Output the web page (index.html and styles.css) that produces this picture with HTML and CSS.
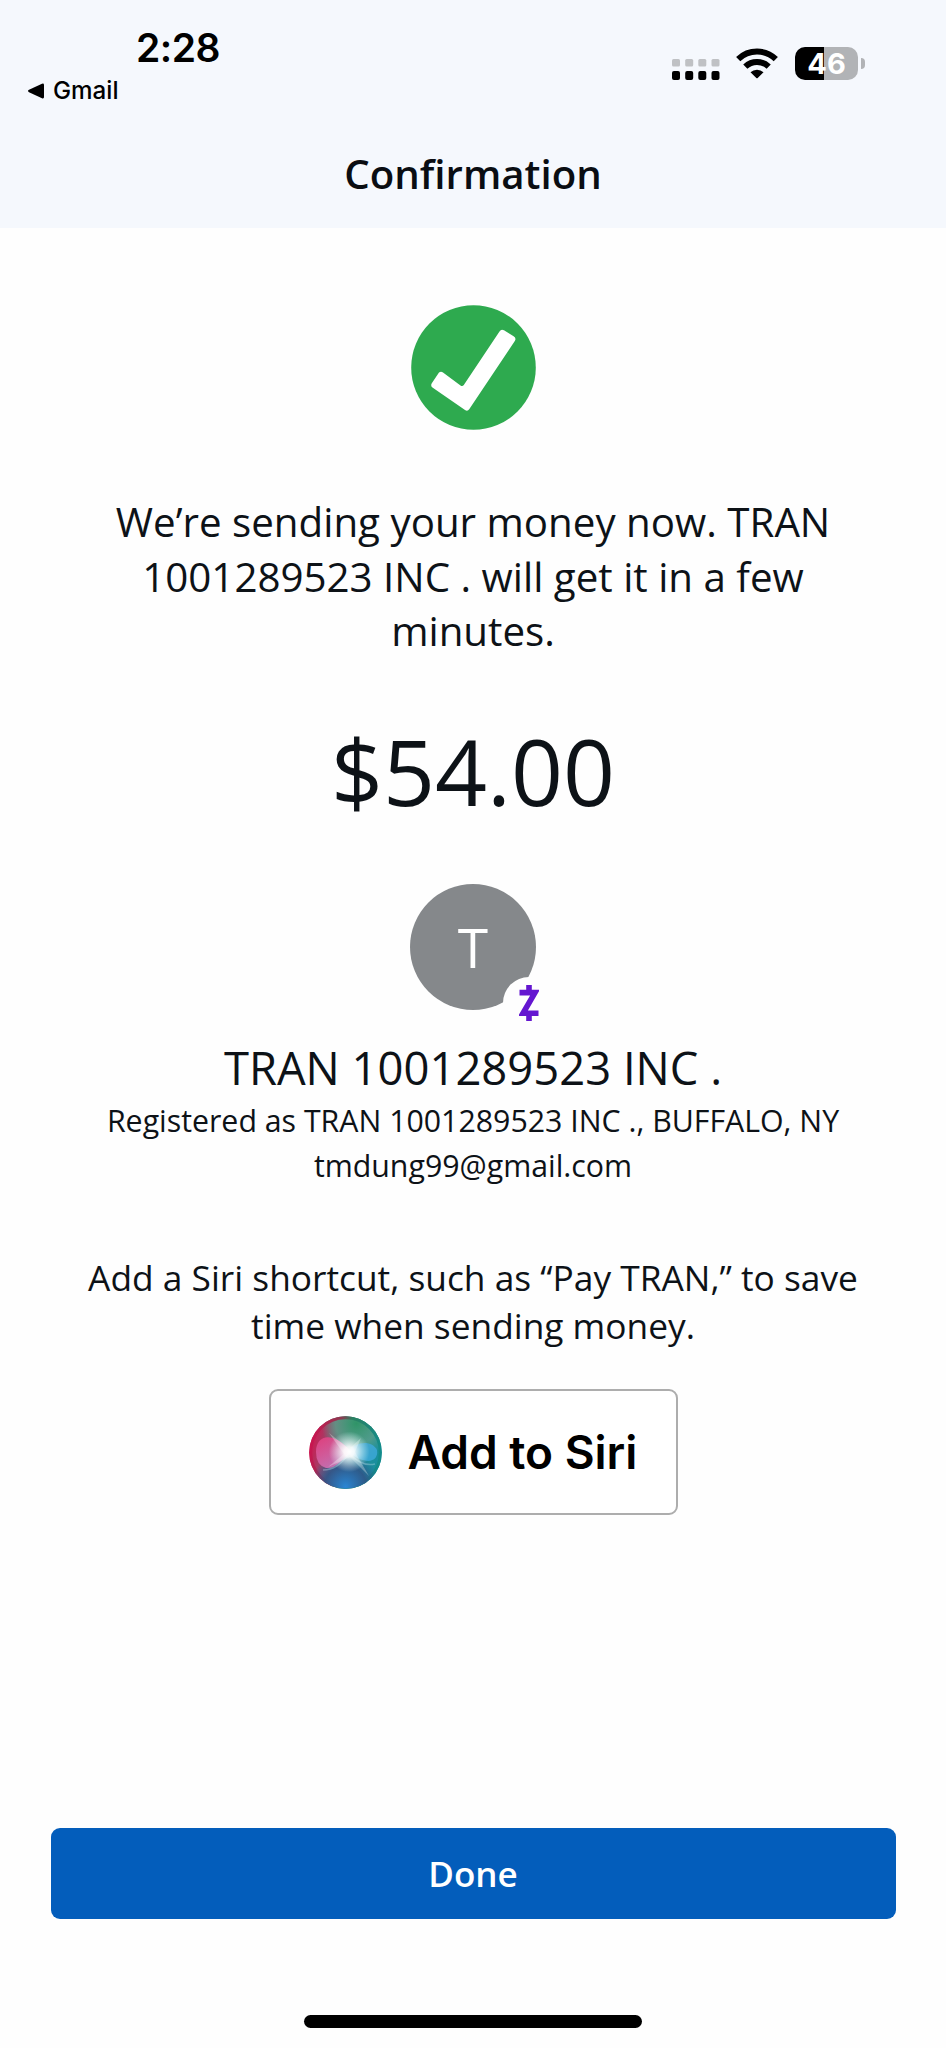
FILE: index.html
```html
<!DOCTYPE html>
<html lang="en">
<head>
<meta charset="utf-8">
<title>Confirmation</title>
<link rel="stylesheet" href="styles.css">
</head>
<body>
<div class="screen">
  <header class="header">
    <div class="status">
      <div class="status-left">
        <div class="time">2:28</div>
        <div class="back">
          <svg class="back-arrow" width="16" height="16" viewBox="0 0 16 16"><path d="M1 6.8 14 .7Q16 0 16 2v12q0 2-2 1.300L1 9.200Q-1 8 1 6.800Z"/></svg>
          <span class="back-label">Gmail</span>
        </div>
      </div>
      <div class="status-right">
        <svg class="signal" width="48" height="21" viewBox="0 0 48 21">
          <g fill="#bfc1c4"><rect width="8" height="7.500" rx="1.500"/><rect x="13.200" width="8" height="7.500" rx="1.500"/><rect x="26.300" width="8" height="7.500" rx="1.500"/><rect x="39.500" width="8" height="7.500" rx="1.500"/></g>
          <g><rect y="12" width="8" height="9" rx="2"/><rect x="13.200" y="12" width="8" height="9" rx="2"/><rect x="26.300" y="12" width="8" height="9" rx="2"/><rect x="39.500" y="12" width="8" height="9" rx="2"/></g>
        </svg>
        <svg class="wifi" width="42" height="31" viewBox="0 0 42 31">
          <g fill="none" stroke="#000" stroke-width="6"><path d="M2.200 11.200a27 27 0 0 1 37.600 0"/><path d="M9.300 18.600a17 17 0 0 1 23.400 0"/></g>
          <path d="M14.500 24.300a9.500 9.500 0 0 1 13 0L21.700 30q-.7.700-1.400 0Z"/>
        </svg>
        <div class="battery"><span class="battery-level">46</span><span class="battery-tip"></span></div>
      </div>
    </div>
    <h1 class="title">Confirmation</h1>
  </header>
  <main class="content">
    <svg class="check" width="125" height="125" viewBox="0 0 125 125">
      <circle cx="62.500" cy="62.500" r="62.300" fill="#2eaa4f"/>
      <path d="M28 67.500q2-1.500 4 0L49.500 80.500q2 1.300 3.300-.5L88.500 26.500q1.700-2.900 4.500-1.200l9.600 6q3 1.900 1.200 4.700L58.200 104.300q-1.600 2.500-4.200.8L21.800 82.800q-2.600-2-1-4.500Z" fill="#fff"/>
    </svg>
    <p class="message">We’re sending your money now. TRAN<br>1001289523 INC . will get it in a few<br>minutes.</p>
    <div class="amount">$54.00</div>
    <div class="avatar">
      <span class="avatar-letter">T</span>
      <span class="zelle">
        <svg width="20" height="36" viewBox="0 0 20 36" fill="none" stroke="#6416d0" stroke-width="5.600"><path d="M.5 7.600H16L4 28.300H19.500M10 0V7M10 28V36"/></svg>
      </span>
    </div>
    <h2 class="name">TRAN 1001289523 INC .</h2>
    <p class="registered">Registered as TRAN 1001289523 INC ., BUFFALO, NY</p>
    <p class="email">tmdung99@gmail.com</p>
    <p class="hint">Add a Siri shortcut, such as “Pay TRAN,” to save<br>time when sending money.</p>
    <button class="siri">
      <svg class="orb" width="73" height="73" viewBox="0 0 73 73">
        <defs>
          <linearGradient id="base" x1="0" y1=".35" x2="1" y2=".6"><stop offset="0" stop-color="#d5144f"/><stop offset=".3" stop-color="#8d5170"/><stop offset=".6" stop-color="#298f96"/><stop offset="1" stop-color="#168f9f"/></linearGradient>
          <radialGradient id="green" cx=".65" cy=".1" r=".48"><stop offset="0" stop-color="#2f9467"/><stop offset=".6" stop-color="#5a9e88" stop-opacity=".8"/><stop offset="1" stop-color="#4b9d86" stop-opacity="0"/></radialGradient>
          <radialGradient id="blue" cx=".5" cy=".97" r=".48"><stop offset="0" stop-color="#2a86d4"/><stop offset=".6" stop-color="#2f5588" stop-opacity=".9"/><stop offset="1" stop-color="#245b99" stop-opacity="0"/></radialGradient>
          <radialGradient id="glow" cx=".55" cy=".49" r=".28"><stop offset="0" stop-color="#fff"/><stop offset=".25" stop-color="#fff" stop-opacity=".9"/><stop offset="1" stop-color="#dff" stop-opacity="0"/></radialGradient>
          <linearGradient id="pink" x1="0" y1="0" x2=".5" y2="1"><stop offset="0" stop-color="#e2407f"/><stop offset="1" stop-color="#cb72b5"/></linearGradient>
          <linearGradient id="rim" x1="0" y1=".4" x2="1" y2=".6"><stop offset="0" stop-color="#c81550"/><stop offset=".35" stop-color="#8c3a50"/><stop offset=".5" stop-color="#2a8060"/><stop offset="1" stop-color="#138c8c"/></linearGradient>
        </defs>
        <circle cx="36.500" cy="36.500" r="36.300" fill="url(#base)"/>
        <circle cx="36.500" cy="36.500" r="36.300" fill="url(#green)"/>
        <circle cx="36.500" cy="36.500" r="34.800" fill="none" stroke="url(#rim)" stroke-width="3"/>
        <circle cx="36.500" cy="36.500" r="36.300" fill="url(#blue)"/>
        <path d="M7 36C7 18 25 15 42 36C32 44 27 53 17 52Q7 49 7 36Z" fill="url(#pink)" opacity=".92"/>
        <path d="M39 36C47 25 63 24 68 34C70 46 57 50 39 36Z" fill="#3fa9dc" opacity=".8"/>
        <path d="M14 54Q29 54 40 37Q52 51 66 48" fill="none" stroke="#c6e6f2" stroke-opacity=".35" stroke-width="1.500"/>
        <path d="M40 33 20 17 35 38 19 51 41 41 60 60 46 36 52 22Z" fill="#fff" opacity=".3"/>
        <circle cx="36.500" cy="36.500" r="36.300" fill="url(#glow)"/>
      </svg>
      <span class="siri-label">Add to Siri</span>
    </button>
  </main>
  <footer class="footer">
    <button class="done">Done</button>
    <div class="home-indicator"></div>
  </footer>
</div>
</body>
</html>
```
FILE: styles.css
```css
* { box-sizing: border-box; }
body { margin: 0; background: #fefefe; color: #0d1217; font-family: "Open Sans", sans-serif; }
h1, h2, p { margin: 0; font-weight: 400; white-space: nowrap; }
button { margin: 0; padding: 0; font: inherit; }
svg { display: block; flex: none; }
.screen { width: 946px; height: 2048px; display: flex; flex-direction: column; }

.header { height: 228px; padding-top: 24px; background: #f5f8fd; color: #0a0d12; }
.status { display: flex; justify-content: space-between; height: 122px; padding: 0 88px 0 28px; color: #000; font-family: Inter, sans-serif; }
.time { height: 48px; padding-left: 108px; font-size: 39px; font-weight: 600; line-height: 48px; letter-spacing: -0.5px; }
.back { display: flex; align-items: center; gap: 9px; height: 30px; margin-top: 4px; }
.back-label { font-size: 24.2px; font-weight: 500; line-height: 30px; }
.status-right { display: flex; align-items: flex-start; padding-top: 23px; }
.signal { margin: 12px 16px 0 0; }
.wifi { margin: 1px 17px 0 0; }
.battery { position: relative; width: 63px; height: 33px; border-radius: 10px; background: linear-gradient(90deg, #000 29px, #b1b3b6 29px); color: #fff; text-align: center; }
.battery-level { font-size: 29px; font-weight: 700; line-height: 33px; }
.battery-tip { position: absolute; left: 66px; top: 11px; width: 4px; height: 11px; border-radius: 0 4px 4px 0; background: #b1b3b6; }
.title { font-size: 40.2px; font-weight: 600; line-height: 55px; text-align: center; }

.content { flex: 1; display: flex; flex-direction: column; align-items: center; padding-top: 77px; text-align: center; }
.message { margin-top: 65px; font-size: 40.3px; line-height: 54.7px; }
.amount { margin-top: 57px; font-size: 91px; line-height: 110px; }
.avatar { position: relative; display: flex; align-items: center; justify-content: center; width: 126px; height: 126px; margin-top: 58px; border-radius: 50%; background: #85888b; color: #fff; }
.avatar-letter { font-size: 55px; line-height: 60px; }
.zelle { position: absolute; left: 93px; top: 93px; display: flex; align-items: center; justify-content: center; width: 52px; height: 52px; border-radius: 50%; background: #fefefe; }
.name { margin-top: 27px; font-size: 45.4px; line-height: 60px; }
.registered, .email { margin-top: 1px; font-size: 30.3px; line-height: 44px; }
.registered { margin-top: 2px; }
.hint { margin-top: 65px; font-size: 35.3px; line-height: 48px; }
.siri { display: flex; align-items: center; gap: 26px; width: 409px; height: 126px; margin-top: 40px; padding-left: 38px; border: 2px solid #adadad; border-radius: 9px; background: #fff; color: #000; }
.siri-label { font-family: Inter, sans-serif; font-size: 46px; font-weight: 600; line-height: 56px; white-space: nowrap; }

.footer { height: 220px; display: flex; flex-direction: column; align-items: center; }
.done { width: 845px; height: 91px; border: 0; border-radius: 9px; background: #035dbb; color: #fff; font-size: 35px; font-weight: 600; }
.home-indicator { width: 338px; height: 13px; margin-top: 96px; border-radius: 7px; background: #000; }
```
